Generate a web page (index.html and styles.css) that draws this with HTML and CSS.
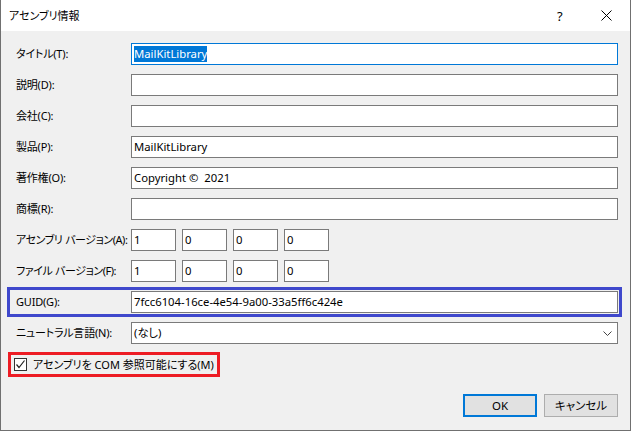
FILE: index.html
```html
<!DOCTYPE html>
<html lang="ja">
<head>
<meta charset="utf-8">
<title>アセンブリ情報</title>
<link rel="stylesheet" href="styles.css">
</head>
<body>
<div class="window">
  <div class="titlebar">
    <span class="title">アセンブリ情報</span>
    <span class="help">?</span>
    <span class="close">
      <svg width="11" height="11" viewBox="0 0 11 11"><path d="M0.5 0.5 L10.5 10.5 M10.5 0.5 L0.5 10.5" stroke="#000" stroke-width="1" fill="none"/></svg>
    </span>
  </div>
  <div class="content">
    <div class="form">
      <div class="row">
        <span class="label">タイトル(T):</span>
        <div class="input focused"><span class="sel">MailKitLibrary</span></div>
      </div>
      <div class="row">
        <span class="label">説明(D):</span>
        <div class="input"></div>
      </div>
      <div class="row">
        <span class="label">会社(C):</span>
        <div class="input"></div>
      </div>
      <div class="row">
        <span class="label">製品(P):</span>
        <div class="input">MailKitLibrary</div>
      </div>
      <div class="row">
        <span class="label">著作権(O):</span>
        <div class="input">Copyright ©&nbsp; 2021</div>
      </div>
      <div class="row">
        <span class="label">商標(R):</span>
        <div class="input"></div>
      </div>
      <div class="row">
        <span class="label tight">アセンブリ バージョン(A):</span>
        <div class="versions">
          <div class="input small">1</div>
          <div class="input small">0</div>
          <div class="input small">0</div>
          <div class="input small">0</div>
        </div>
      </div>
      <div class="row">
        <span class="label tight">ファイル バージョン(F):</span>
        <div class="versions">
          <div class="input small">1</div>
          <div class="input small">0</div>
          <div class="input small">0</div>
          <div class="input small">0</div>
        </div>
      </div>
      <div class="row mark-blue">
        <span class="label">GUID(G):</span>
        <div class="input">7fcc6104-16ce-4e54-9a00-33a5ff6c424e</div>
      </div>
      <div class="row">
        <span class="label">ニュートラル言語(N):</span>
        <div class="input combo">
          <span class="combo-text">(なし)</span>
          <svg class="chevron" width="9" height="5" viewBox="0 0 9 5"><path d="M0.5 0.5 L4.5 4.5 L8.5 0.5" stroke="#444" stroke-width="1" fill="none"/></svg>
        </div>
      </div>
    </div>
    <div class="check-row mark-red">
      <span class="checkbox">
        <svg width="11" height="11" viewBox="0 0 11 11"><path d="M1.5 5.5 L4 8.5 L9.5 1.5" stroke="#222" stroke-width="1.2" fill="none"/></svg>
      </span>
      <span class="check-label">アセンブリを COM 参照可能にする(M)</span>
    </div>
    <div class="buttons">
      <div class="btn default">OK</div>
      <div class="btn">キャンセル</div>
    </div>
  </div>
</div>
</body>
</html>
```
FILE: styles.css
```css
* { box-sizing: border-box; }
html, body { margin: 0; padding: 0; }
body {
  width: 631px;
  height: 431px;
  overflow: hidden;
  font-family: "Noto Sans", "Noto Sans CJK JP", sans-serif;
  font-size: 11px;
  color: #000;
  font-feature-settings: "palt";
}
.window {
  width: 631px;
  height: 431px;
  border-left: 1px solid #707070;
  border-right: 1px solid #707070;
  border-bottom: 1px solid #707070;
  background: #f0f0f0;
  display: flex;
  flex-direction: column;
}
.titlebar {
  height: 31px;
  background: #fff;
  display: flex;
  align-items: center;
  padding-left: 8px;
}
.title {
  flex: 1;
  font-size: 11px;
  line-height: 16px;
}
.help {
  font-size: 13px;
  width: 8px;
  margin-right: 36px;
  line-height: 16px;
}
.close {
  display: flex;
  margin-right: 18px;
}
.content {
  flex: 1;
  padding: 12px 12px 0 15px;
  display: flex;
  flex-direction: column;
}
.form {
  display: flex;
  flex-direction: column;
  gap: 9px;
}
.row {
  display: flex;
  align-items: center;
}
.label {
  width: 115px;
  flex: none;
  line-height: 16px;
  white-space: nowrap;
  color: #000;
  letter-spacing: -0.2px;
}
.label.tight {
  letter-spacing: -0.45px;
  word-spacing: 0.5px;
}
.input {
  flex: 1;
  height: 22px;
  border: 1px solid #7a7a7a;
  background: #fff;
  padding: 0 2px;
  display: flex;
  align-items: center;
  line-height: 16px;
  white-space: nowrap;
  font-size: 11.3px;
}
.input.focused { border-color: #0078d7; }
.sel {
  background: #0078d7;
  color: #fff;
  line-height: 16px;
}
.versions {
  display: flex;
  gap: 6px;
}
.input.small {
  flex: none;
  width: 45px;
}
.combo {
  justify-content: space-between;
  padding-right: 5px;
}
.mark-blue {
  border: 3px solid #3f48cc;
  margin: -4px -4px -4px -9px;
  padding: 1px 1px 1px 6px;
}
.check-row {
  align-self: flex-start;
  display: flex;
  align-items: center;
  height: 25px;
  width: 212px;
  margin: 8px 0 0 -8px;
  padding-left: 3px;
}
.mark-red { border: 3px solid #ed1c24; }
.checkbox {
  width: 13px;
  height: 13px;
  border: 1px solid #333;
  background: #fff;
  display: flex;
  align-items: center;
  justify-content: center;
  margin-right: 6px;
}
.check-label {
  line-height: 16px;
  white-space: nowrap;
}
.buttons {
  display: flex;
  justify-content: flex-end;
  gap: 7px;
  margin-top: 17px;
}
.btn {
  width: 74px;
  height: 23px;
  background: #e1e1e1;
  border: 1px solid #adadad;
  display: flex;
  align-items: center;
  justify-content: center;
  line-height: 16px;
  font-size: 11.5px;
}
.btn.default { border: 2px solid #0078d7; }
```
